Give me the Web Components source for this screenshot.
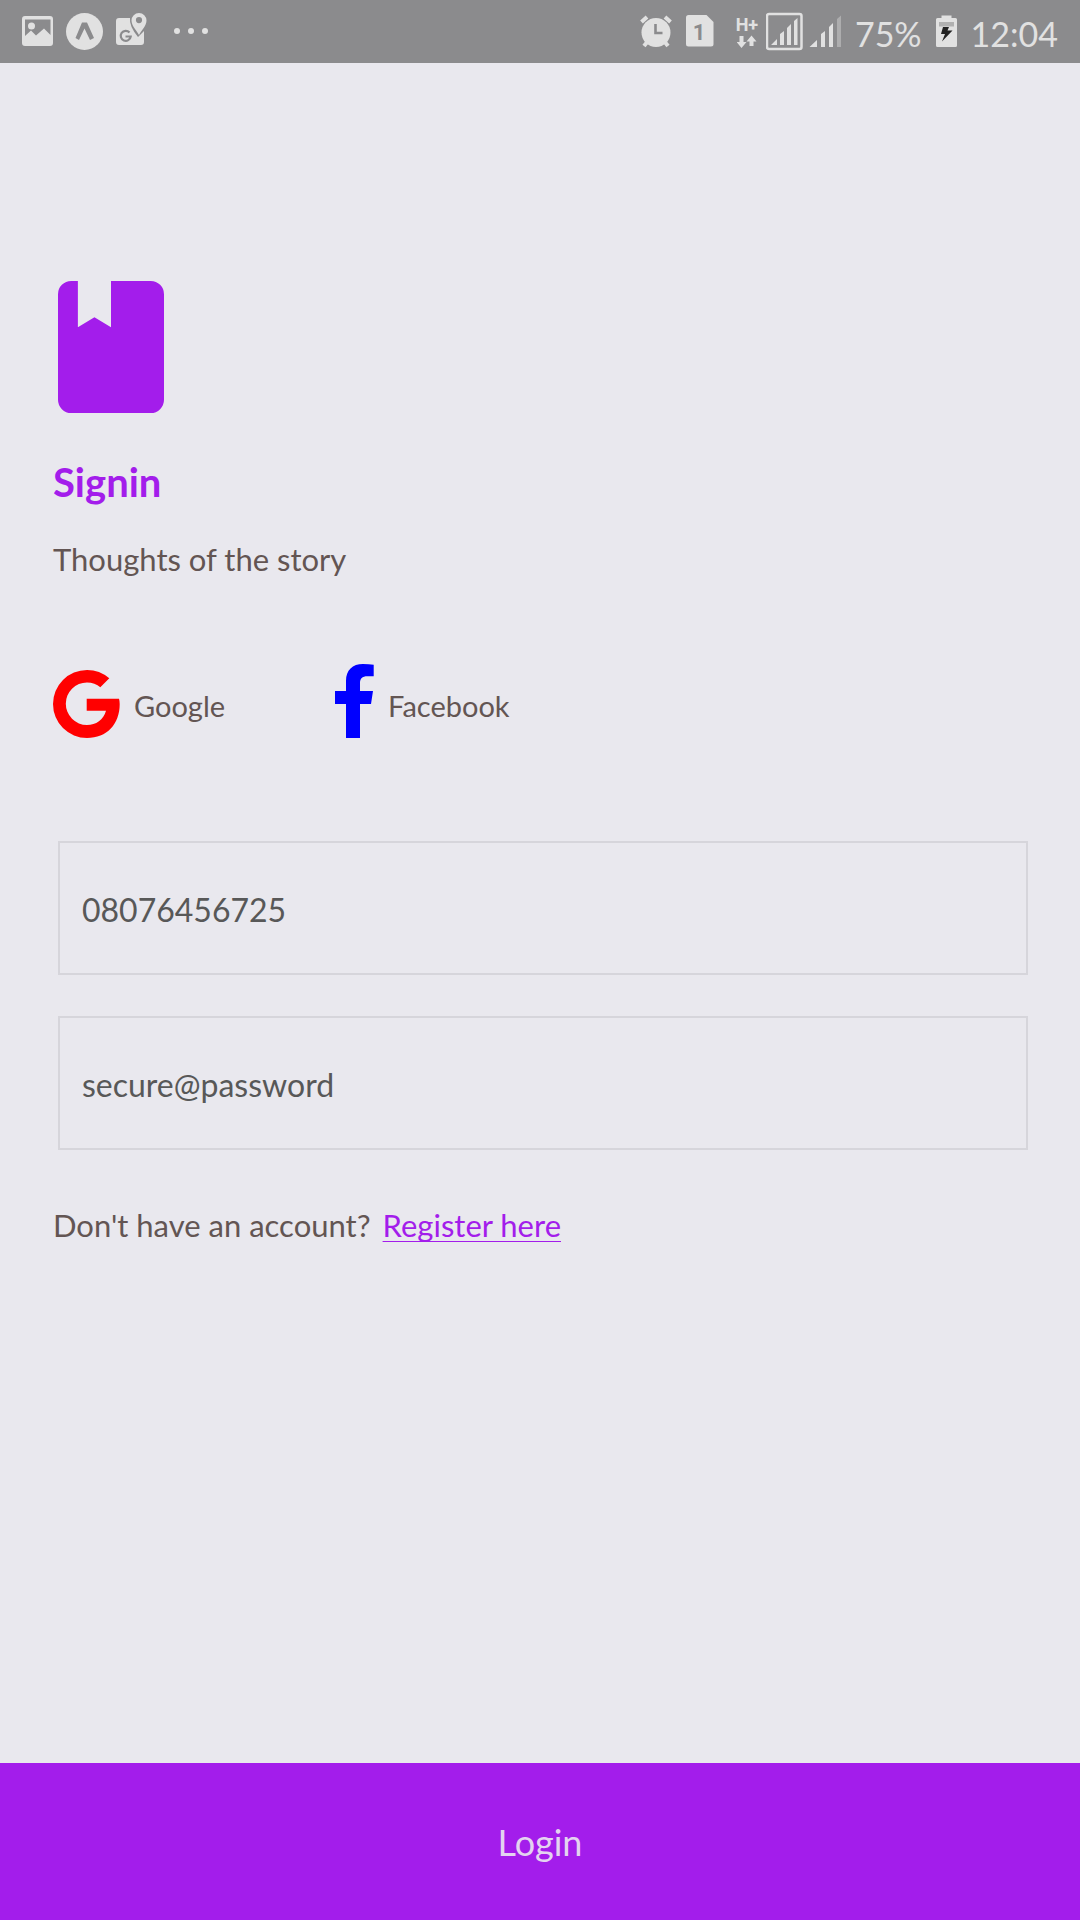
<!DOCTYPE html>
<html lang="en">
<head>
<meta charset="utf-8">
<meta name="viewport" content="width=device-width, initial-scale=1">
<title>Signin</title>
<style>
body { margin: 0; background: #e9e8ee; font-family: Lato, "Open Sans", sans-serif; }
</style>
</head>
<body>
<signin-page></signin-page>
<script>
const define = (name, html, setup) => customElements.define(name, class extends HTMLElement {
  connectedCallback() {
    if (this.shadowRoot) return;
    const t = document.createElement('template');
    t.innerHTML = html;
    this.attachShadow({ mode: 'open' }).append(t.content.cloneNode(true));
    if (setup) setup(this, this.shadowRoot);
  }
});

define('status-bar', `
<style>
:host { display: flex; justify-content: space-between; height: 63px; padding: 0 22px; background: #8b8b8d; color: #e1e1e1; font-size: 34px; line-height: 40px; overflow: hidden; }
.group { display: flex; align-items: center; }
svg { display: block; height: 63px; fill: #e1e1e1; flex: none; }
.left { gap: 13px; }
.dots { margin-left: 14px; }
.right { gap: 14px; }
.signals { display: flex; align-items: center; gap: 6px; }
.net { display: flex; flex-direction: column; align-items: center; font: 700 18px/20px Roboto, sans-serif; width: 26px; margin-left: 6px; }
.net svg { height: 14px; }
.text { padding-top: 4px; }
</style>
<div class="group left">
  <svg width="31" viewBox="22 0 31 63"><path fill-rule="evenodd" d="M25 16H50a3 3 0 0 1 3 3V43a3 3 0 0 1-3 3H25a3 3 0 0 1-3-3V19a3 3 0 0 1 3-3zM25 19.500V36L31 30.500 36 35.500 44 28.500 50.500 35V19.500z"/><circle cx="31.500" cy="26" r="3.500"/></svg>
  <svg width="37" viewBox="66 0 37 63"><circle cx="84.500" cy="31.500" r="18.500"/><path fill="#8b8b8d" d="M82 22.500H87L94 38 90 40 84.500 28.500 79 40 75.500 38z"/></svg>
  <svg width="31" viewBox="117 0 31 63"><path d="M120 18H131Q130 26 139 37L145 31V42a3 3 0 0 1-3 3H120a3 3 0 0 1-3-3V21a3 3 0 0 1 3-3z"/><path fill-rule="evenodd" d="M140 13a7.500 7.500 0 0 1 7.500 7.500C147.500 26 142 31 140 35 138 31 132.500 26 132.500 20.500A7.500 7.500 0 0 1 140 13zm0 4a3 3 0 1 0 0 6.200 3 3 0 0 0 0-6.200z"/><path fill="none" stroke="#8b8b8d" stroke-width="2.200" d="M130.500 32.500A5 5 0 1 0 131.700 36.500H126.500"/></svg>
  <svg class="dots" width="35" viewBox="175 0 35 63"><circle cx="178" cy="31" r="3"/><circle cx="192" cy="31" r="3"/><circle cx="206" cy="31" r="3"/></svg>
</div>
<div class="group right">
  <svg width="32" viewBox="636 0 32 63"><circle cx="652" cy="32.500" r="14.500"/><path stroke="#e1e1e1" stroke-width="4" d="M637.500 22 643 17M666.500 22 661 17M644 41 640 46M660 41 664 46"/><path fill="none" stroke="#8b8b8d" stroke-width="2.600" d="M651.500 24V33H658.500"/></svg>
  <svg width="28" viewBox="684 0 28 63"><path d="M686.500 15H704.500L711.500 22V44a2.500 2.500 0 0 1-2.500 2.500H686.500A2.500 2.500 0 0 1 684 44V17.500a2.500 2.500 0 0 1 2.500-2.500z"/><text x="697" y="40" text-anchor="middle" font-family="Roboto" font-weight="700" font-size="22" fill="#8b8b8d">1</text></svg>
  <div class="signals">
    <div class="net"><span>H+</span><svg width="20" viewBox="735 35 20 14"><path d="M737.500 36H741.500V42H744.500L739.500 48 734.500 42H737.500zM747.500 46H751.500V41.500H754.500L749.500 35.500 744.500 41.500H747.500z"/></svg></div>
    <svg width="37" viewBox="767 0 37 63"><rect x="768" y="14" width="34.500" height="35" rx="2" fill="none" stroke="#e1e1e1" stroke-width="2.500"/><path d="M772 45 778 39V45zM781 34 785 31V45H781zM788 28 792 24V45H788zM795 21 798.500 18V45H795z"/></svg>
    <svg width="32" viewBox="809 0 32 63"><path d="M809.500 47 817 40V47zM821 34 825 31V47H821zM829 27 833 23V47H829z"/><path opacity=".4" d="M837 19 841 15.500V47H837z"/></svg>
  </div>
  <span class="text">75%</span>
  <svg width="21" viewBox="936 0 21 63"><path d="M941.500 18V15.500H951.500V18H955.500a1.500 1.500 0 0 1 1.500 1.500V45.500a1.500 1.500 0 0 1-1.500 1.500H937.500a1.500 1.500 0 0 1-1.500-1.500V19.500a1.500 1.500 0 0 1 1.500-1.500z"/><path fill="#b0b0b0" d="M939 22H954V26.500H939z"/><path fill="#222" d="M943 27H949L947.500 30.500H952.500L942 41.500 945 34H941z"/></svg>
  <span class="text">12:04</span>
</div>`);

define('book-logo', `
<style>:host { display: block; } svg { display: block; }</style>
<svg width="106" height="132" viewBox="4 2 16 20" preserveAspectRatio="none" role="img" aria-label="Book"><path fill="#a31deb" d="M18 22a2 2 0 0 0 2-2V4a2 2 0 0 0-2-2H12V9L9.500 7.500 7 9V2H6A2 2 0 0 0 4 4V20a2 2 0 0 0 2 2z"/></svg>`);

define('social-button', `
<style>
:host { display: block; }
button { display: flex; align-items: flex-end; gap: 14px; margin: 0; padding: 0; border: 0; background: none; color: #635553; font: inherit; font-size: 29px; line-height: 34px; cursor: pointer; }
span { padding-bottom: 15px; }
</style>
<button type="button"><slot name="icon"></slot><span><slot></slot></span></button>`);

define('form-field', `
<style>
:host { display: block; }
input { display: block; box-sizing: border-box; width: 100%; height: 134px; margin: 0; padding: 2px 22px 0; border: 2px solid #d6d5db; border-radius: 0; background: transparent; color: #585858; font: inherit; font-size: 32px; outline: none; }
</style>
<input>`, (host, root) => {
  const input = root.querySelector('input');
  input.type = host.getAttribute('type') || 'text';
  input.value = host.getAttribute('value') || '';
  input.setAttribute('aria-label', host.getAttribute('label') || '');
});

define('login-button', `
<style>
:host { display: block; }
button { display: block; width: 100%; margin: 0; padding: 57px 0 56px; border: 0; background: #a31deb; color: #e4d3f0; font: inherit; font-size: 36px; line-height: 44px; cursor: pointer; }
</style>
<button type="submit"><slot></slot></button>`);

define('signin-page', `
<style>
:host { display: flex; flex-direction: column; min-height: 100vh; color: #635553; font-size: 31px; line-height: 40px; }
main { flex: 1; padding: 218px 52px 40px 53px; }
book-logo { margin-left: 5px; }
h1 { margin: 45px 0 33px; color: #a31deb; font-size: 40px; line-height: 48px; font-weight: 700; }
p { margin: 0; }
.social { display: flex; align-items: flex-end; gap: 110px; margin-top: 85px; }
.social svg { display: block; flex: none; }
.fields { display: flex; flex-direction: column; gap: 41px; margin: 103px 0 55px 5px; }
.register { display: flex; flex-wrap: wrap; gap: 0 12px; }
a { color: #a31deb; text-decoration: underline 1px; text-underline-offset: 4px; text-decoration-skip-ink: none; }
</style>
<status-bar></status-bar>
<main>
  <book-logo></book-logo>
  <h1>Signin</h1>
  <p>Thoughts of the story</p>
  <div class="social">
    <social-button><svg slot="icon" width="67" height="68" viewBox="53 670 67 68"><path fill="#f00" d="M109.300 678.300A34 34 0 0 0 87 670 34 34 0 0 0 87 738C107 738 119.700 724 119.700 704Q119.700 701 119 698.700H86.700V710.800H106C103.500 720 96 725 87 725A21.200 21.300 0 0 1 87 682.400C92 682.400 97 684 100.300 687.300z"/></svg>Google</social-button>
    <social-button><svg slot="icon" width="39" height="74" viewBox="335 664 39 74"><path fill="#00f" d="M346 738V704H335V691H346V681C346 670 352.500 664 363 664Q369 664 373.700 664.700V676.300H367.500C362 676.300 360 679 360 683V691H373L371 704H360V738z"/></svg>Facebook</social-button>
  </div>
  <div class="fields">
    <form-field label="Phone number" type="tel" value="08076456725"></form-field>
    <form-field label="Password" value="secure@password"></form-field>
  </div>
  <p class="register"><span>Don't have an account?</span><a href="#register">Register here</a></p>
</main>
<login-button>Login</login-button>`);
</script>
</body>
</html>
